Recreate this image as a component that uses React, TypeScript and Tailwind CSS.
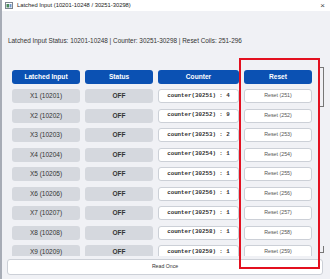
import React from "react";

const rows = [
  { x: "X1 (10201)", c: "counter(30251) : 4", r: "Reset (251)" },
  { x: "X2 (10202)", c: "counter(30252) : 9", r: "Reset (252)" },
  { x: "X3 (10203)", c: "counter(30253) : 2", r: "Reset (253)" },
  { x: "X4 (10204)", c: "counter(30254) : 1", r: "Reset (254)" },
  { x: "X5 (10205)", c: "counter(30255) : 1", r: "Reset (255)" },
  { x: "X6 (10206)", c: "counter(30256) : 1", r: "Reset (256)" },
  { x: "X7 (10207)", c: "counter(30257) : 1", r: "Reset (257)" },
  { x: "X8 (10208)", c: "counter(30258) : 1", r: "Reset (258)" },
  { x: "X9 (10209)", c: "counter(30259) : 1", r: "Reset (259)" },
];

export default function App() {
  return (
    <div
      className="relative w-[330px] h-[279px] overflow-hidden bg-[#f0f1f5] border-l-2 border-[#a7acb6] text-[#333]"
      style={{ fontFamily: '"Liberation Sans", Arial, sans-serif' }}
    >
      {/* title bar */}
      <div className="h-[11px] bg-white flex items-center pl-[3px] pr-[5px]">
        <svg width="8" height="7" viewBox="0 0 8 7" className="mr-[4px]">
          <rect x="0.5" y="0.5" width="7" height="6" fill="#fff" stroke="#7d8590" />
          <rect x="1.5" y="2" width="2.5" height="3.5" fill="#4a8a5a" />
          <rect x="4.5" y="2" width="2" height="3.5" fill="#6d95c8" />
        </svg>
        <span className="text-[5.8px] leading-none text-[#222] flex-1">
          Latched Input (10201-10248 / 30251-30298)
        </span>
        <span className="text-[8px] leading-none text-[#444]">×</span>
      </div>

      {/* status */}
      <div className="h-[53px] pt-[25px] pl-[6px]">
        <div className="text-[6.4px] leading-[10px] text-[#333]">
          Latched Input Status: 10201-10248 | Counter: 30251-30298 | Reset Coils: 251-296
        </div>
      </div>

      {/* scroll area */}
      <div className="h-[192px] overflow-hidden pt-[6px] pl-[10px]">
        <div className="grid grid-cols-[68px_68px_81px_68px] gap-x-[5px] gap-y-[5.5px]">
          <div className="h-[13.5px] rounded-[3px] bg-[#0b51b3] text-white font-bold text-[6.6px] flex items-center justify-center">
            Latched Input
          </div>
          <div className="h-[13.5px] rounded-[3px] bg-[#0b51b3] text-white font-bold text-[6.6px] flex items-center justify-center">
            Status
          </div>
          <div className="h-[13.5px] rounded-[3px] bg-[#0b51b3] text-white font-bold text-[6.6px] flex items-center justify-center">
            Counter
          </div>
          <div className="h-[13.5px] rounded-[3px] bg-[#0b51b3] text-white font-bold text-[6.6px] flex items-center justify-center">
            Reset
          </div>
          {rows.map((row) => (
            <React.Fragment key={row.x}>
              <div className="h-[14px] rounded-[3px] bg-[#d5d8de] text-[6.5px] font-medium text-[#333] flex items-center justify-center">
                {row.x}
              </div>
              <div className="h-[14px] rounded-[3px] bg-[#d5d8de] text-[6.5px] font-bold text-[#333] flex items-center justify-center">
                OFF
              </div>
              <div
                className="h-[14px] rounded-[3px] bg-white border border-[#ccd0d7] text-[5.8px] font-bold text-[#333] flex items-center justify-center whitespace-pre"
                style={{ fontFamily: '"Liberation Mono", "Courier New", monospace' }}
              >
                {row.c}
              </div>
              <div className="h-[14px] rounded-[3px] bg-white border border-[#ccd0d7] text-[5.3px] text-[#555] flex items-center justify-center">
                {row.r}
              </div>
            </React.Fragment>
          ))}
        </div>
      </div>

      {/* read once */}
      <div className="mt-[3px] ml-[5px] w-[316px] h-[16px] rounded-[3px] bg-white border border-[#ccd0d7] text-[5.2px] text-[#333] flex items-center justify-center">
        Read Once
      </div>

      {/* scrollbar marks */}
      <div className="absolute left-[317px] top-[67px] w-[5px] h-[40px] border-t border-r border-b border-[#777]" />
      <div className="absolute left-[318px] top-[246px] w-[4px] h-[7px] border-r border-b border-[#777]" />

      {/* red annotation */}
      <div className="absolute left-[237px] top-[58px] w-[81px] h-[211px] border-[2.5px] border-[#e3101f]" />
    </div>
  );
}
